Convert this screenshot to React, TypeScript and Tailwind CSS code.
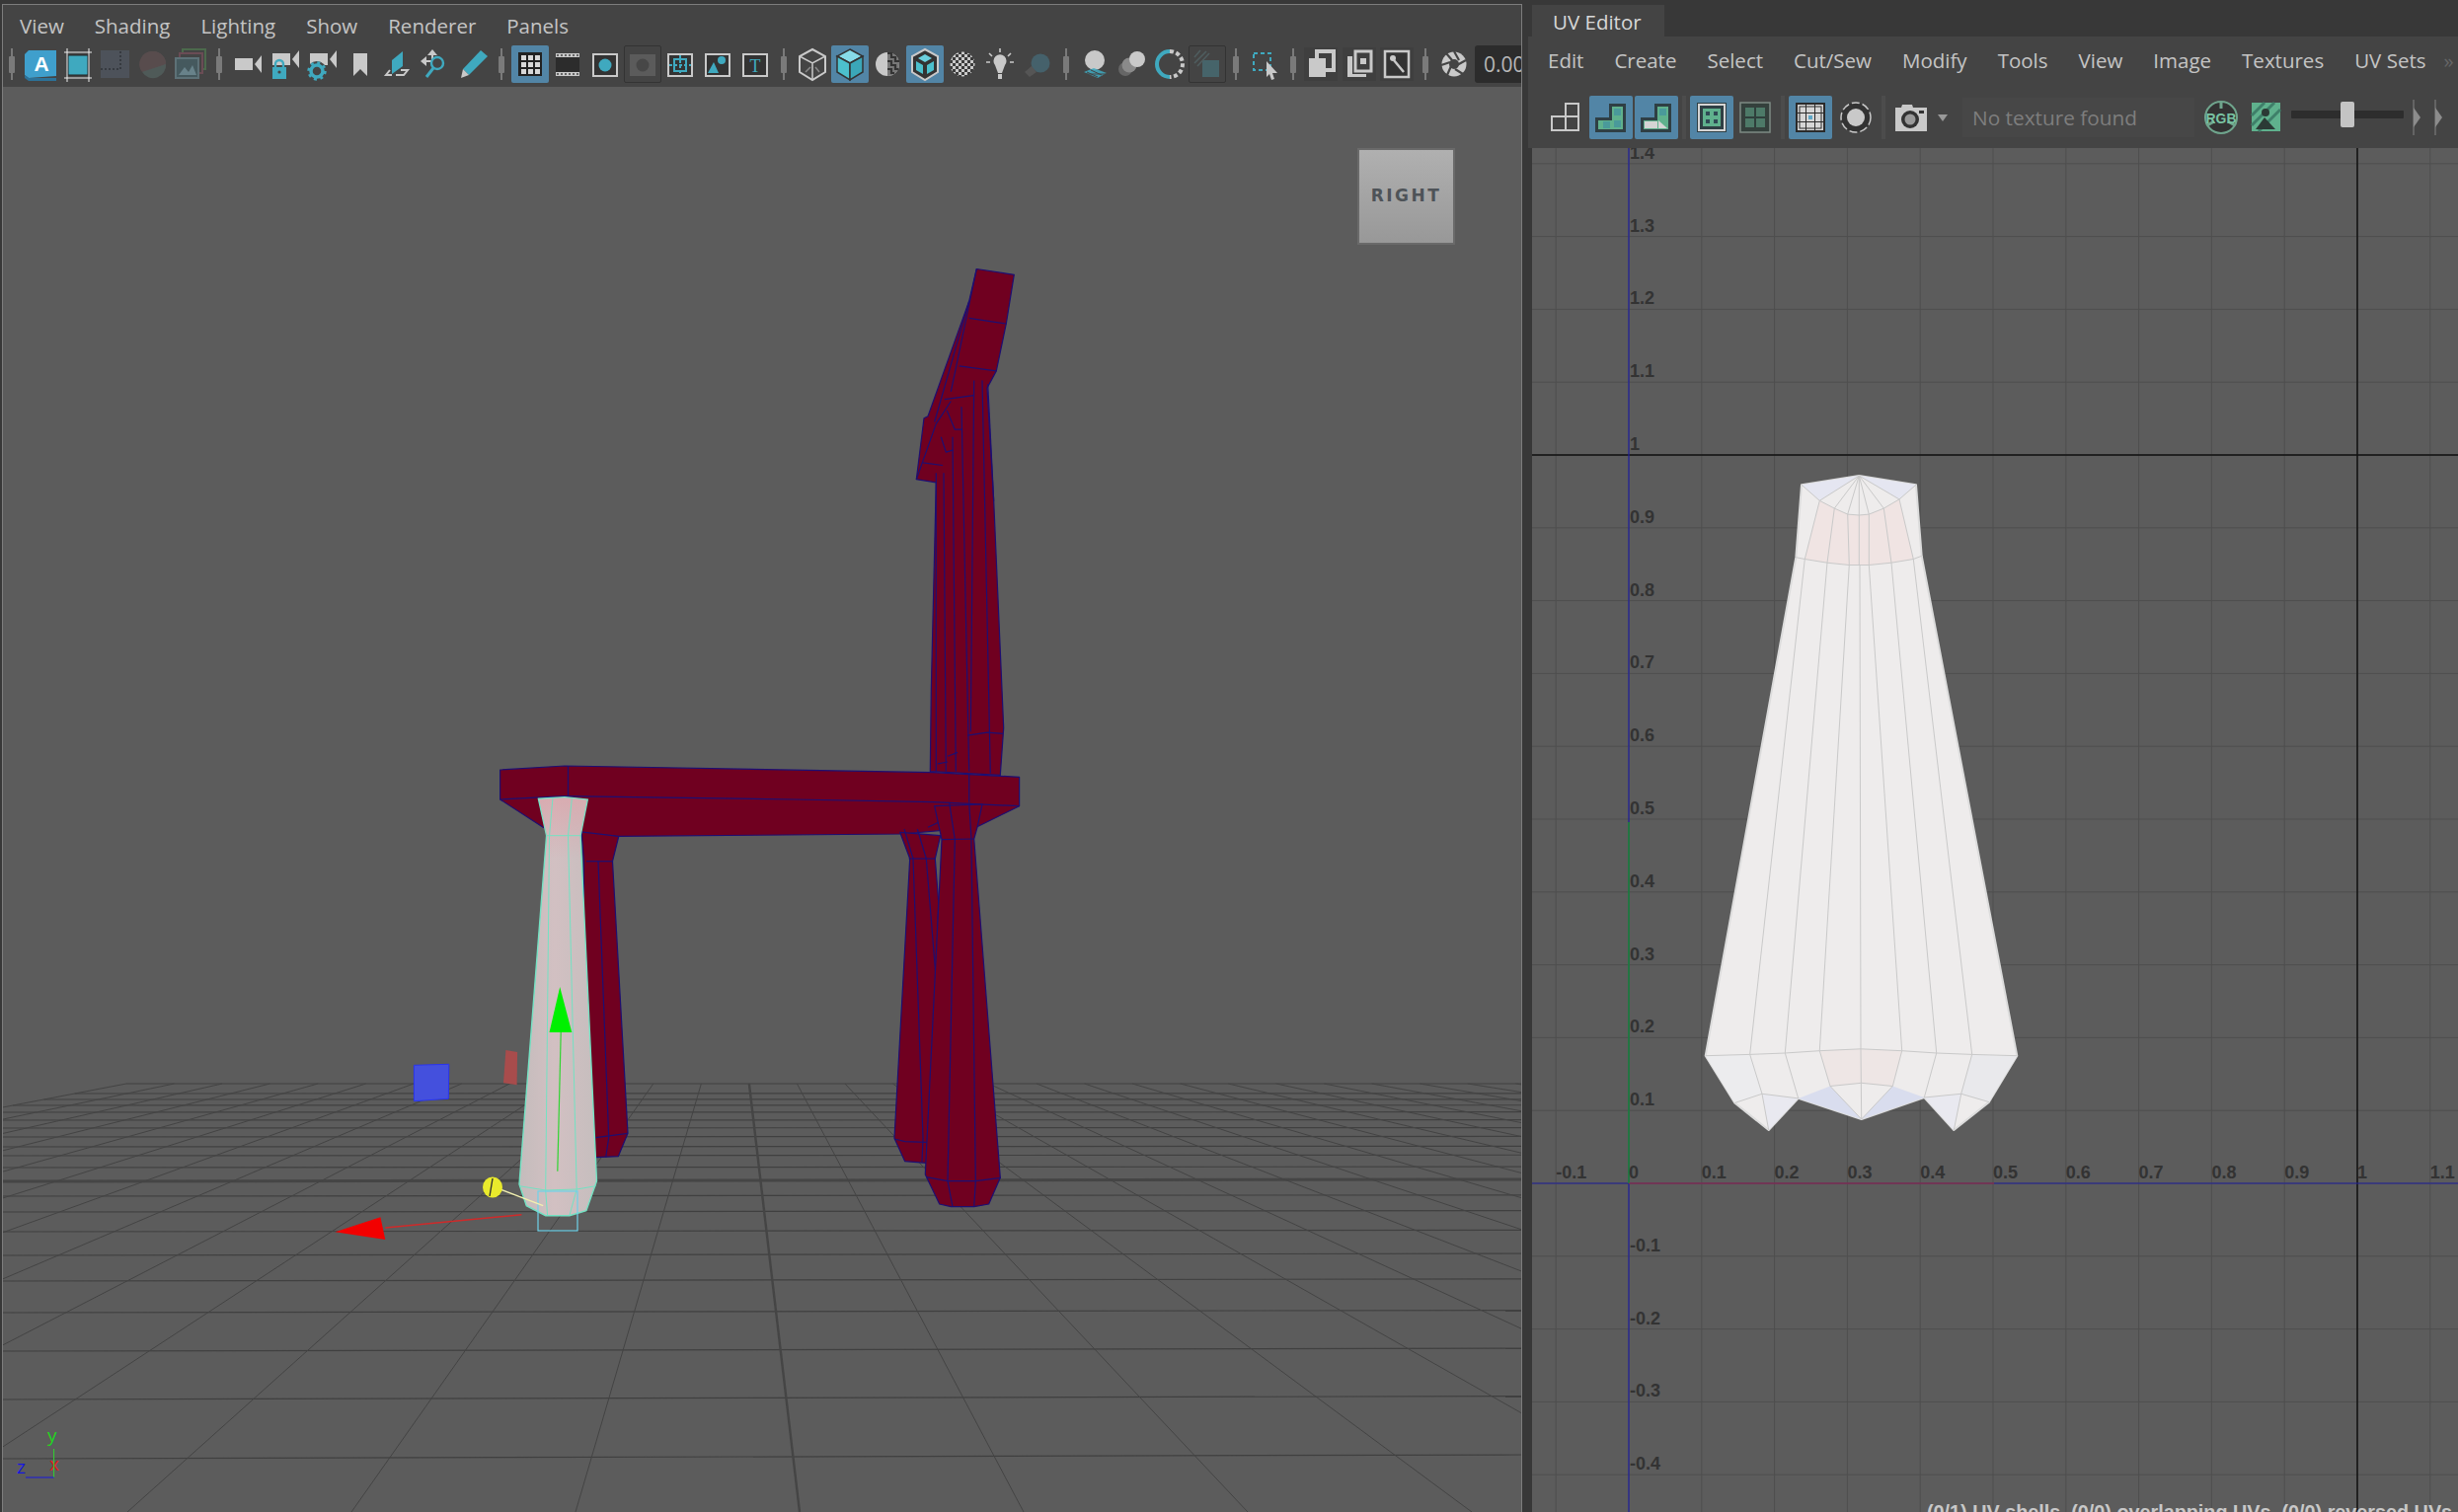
import React from "react";

const T = "#3fa9bf";
const G = "#c9c9c9";
const M = "#6fa58d";

const conv = (s: string, ox: number, oy: number, sx: number, sy: number) =>
  s
    .trim()
    .split(/\s+/)
    .map((p) => {
      const [x, y] = p.split(",").map(Number);
      return `${(ox + x / sx).toFixed(1)},${(oy + y / sy).toFixed(1)}`;
    })
    .join(" ");

const z4 = (s: string) => conv(s, 320, 760, 2.063, 3);
const z5 = (s: string) => conv(s, 880, 240, 3, 2.613);
const z9 = (s: string) => conv(s, 880, 760, 3, 3);
const z6 = (s: string) => conv(s, 1680, 460, 3, 2.178);

const Ico = ({ children, on, dim, w = 38 }: { children: React.ReactNode; on?: boolean; dim?: boolean; w?: number }) => (
  <div
    className={`flex h-[38px] shrink-0 items-center justify-center rounded-[2px] ${on ? "bg-[#5285a6]" : ""} ${
      dim ? "border border-[#333]" : ""
    }`}
    style={{ width: w }}
  >
    <svg width={38} height={38} viewBox="0 0 38 38" className="shrink-0">
      {children}
    </svg>
  </div>
);

const Handle = () => (
  <div className="relative flex h-[38px] w-[20px] shrink-0 items-center justify-center">
    <div className="absolute h-[32px] w-[2px] bg-[#7a7a7a]" />
    <div className="absolute h-[17px] w-[6px] rounded-[1px] bg-[#7a7a7a]" />
  </div>
);

const Cam = ({ x = 6, y = 8 }: { x?: number; y?: number }) => (
  <>
    <rect x={x} y={y} width={18} height={12} fill={G} />
    <polygon points={`${x + 27},${y - 3} ${x + 27},${y + 15} ${x + 20},${y + 6}`} fill={G} />
  </>
);

const viewIcons: React.ReactNode[][] = [
  [
    <Ico key="a">
      <polygon points="3,9 7,5 35,5 35,31 7,33 3,30" fill="#3f9fcc" />
      <polygon points="3,30 7,33 35,33 35,36 7,36 3,33" fill="#2c7299" />
      <text x="20" y="26" textAnchor="middle" fontSize="21" fontWeight="700" fill="#fff" fontFamily="Liberation Sans, sans-serif">A</text>
    </Ico>,
    <Ico key="frame">
      <rect x="9" y="10" width="20" height="20" fill={T} stroke="#222" />
      <path d="M5 7H33M5 33H33M8 3V37M30 3V37" stroke="#eee" strokeWidth="1" />
    </Ico>,
    <Ico key="d1">
      <rect x="4" y="5" width="29" height="28" fill="#4d525a" />
      <path d="M4 24H24V5" stroke="#363a40" strokeWidth="2" strokeDasharray="2 2" fill="none" />
    </Ico>,
    <Ico key="d2">
      <circle cx="19" cy="19" r="13" fill="#5a5255" />
      <path d="M19 6A13 13 0 0 1 32 19L8 27A13 13 0 0 1 19 6" fill="#584c4d" />
      <path d="M32 19A13 13 0 0 1 8 27Z" fill="#4f5a58" />
    </Ico>,
    <Ico key="d3">
      <rect x="11" y="4" width="23" height="20" fill="none" stroke="#4c6a4c" strokeWidth="2" />
      <rect x="8" y="8" width="23" height="20" fill="#444" stroke="#6a4c55" strokeWidth="2" />
      <rect x="4" y="13" width="23" height="20" fill="#45595e" stroke="#5d7177" strokeWidth="2" />
      <path d="M7 30L13 22L17 27L21 20L25 30Z" fill="#68828a" />
    </Ico>,
  ],
  [
    <Ico key="cam">
      <Cam x={6} y={13} />
    </Ico>,
    <Ico key="lock">
      <Cam x={6} y={8} />
      <rect x="6" y="22" width="14" height="12" fill={T} />
      <path d="M9 22V19A4 4 0 0 1 17 19V22" fill="none" stroke={T} strokeWidth="2.4" />
      <circle cx="13" cy="27" r="1.6" fill="#444" />
    </Ico>,
    <Ico key="gear">
      <Cam x={6} y={8} />
      <circle cx="13" cy="26" r="10" fill="#444" />
      <circle cx="13" cy="26" r="6" fill="none" stroke={T} strokeWidth="3.5" />
      <circle cx="13" cy="26" r="8.4" fill="none" stroke={T} strokeWidth="2.6" strokeDasharray="3 3.6" />
    </Ico>,
    <Ico key="mark">
      <polygon points="12,8 26,8 26,31 19,24 12,31" fill={G} />
    </Ico>,
    <Ico key="plane">
      <polygon points="13,15 24,6 24,21 13,29" fill={T} />
      <path d="M13 30H7L11 25M17 30H25L29 25H22" fill="none" stroke={G} strokeWidth="2" />
    </Ico>,
    <Ico key="find">
      <polygon points="16,4 21,10 11,10" fill={G} />
      <polygon points="4,16 10,11 10,21" fill={G} />
      <rect x="10" y="15" width="5" height="2" fill={G} />
      <rect x="15" y="10" width="2" height="5" fill={G} />
      <circle cx="21" cy="18" r="6" fill="none" stroke={T} strokeWidth="2.4" />
      <path d="M17 23L10 32" stroke={T} strokeWidth="3" />
    </Ico>,
    <Ico key="pencil">
      <polygon points="27,5 34,11 15,30 9,24" fill={T} />
      <polygon points="9,24 15,30 7,33" fill={G} />
    </Ico>,
  ],
  [
    <Ico key="grid" on>
      <rect x="7" y="7" width="24" height="24" fill="#222" />
      <g fill="#d8d8d8">
        {[10, 17, 24].map((x) => [10, 17, 24].map((y) => <rect key={`${x}${y}`} x={x} y={y} width="5" height="5" />))}
      </g>
    </Ico>,
    <Ico key="film">
      <rect x="7" y="8" width="24" height="23" fill={G} />
      <rect x="7" y="12" width="24" height="15" fill="#2c2c2c" />
      <path d="M8 10H30M8 29H30" stroke="#444" strokeWidth="1.5" strokeDasharray="2 2" />
    </Ico>,
    <Ico key="res">
      <rect x="7" y="9" width="24" height="22" fill="#333" stroke={G} strokeWidth="2" />
      <circle cx="19" cy="20" r="6.5" fill={T} />
    </Ico>,
    <Ico key="dim" dim>
      <rect x="6" y="9" width="26" height="22" fill="#5b5b5b" />
      <circle cx="19" cy="20" r="6.5" fill="#474747" />
    </Ico>,
    <Ico key="safe">
      <rect x="7" y="9" width="24" height="22" fill="#333" stroke={G} strokeWidth="2" />
      <path d="M19 10V30M8 20H30" stroke={T} strokeWidth="2" strokeDasharray="3 2" />
      <rect x="13" y="14" width="12" height="12" fill="none" stroke={T} strokeWidth="2" />
    </Ico>,
    <Ico key="shape">
      <rect x="7" y="9" width="24" height="22" fill="#333" stroke={G} strokeWidth="2" />
      <polygon points="9,28 15,17 20,28" fill={T} />
      <circle cx="23" cy="15" r="4" fill={T} />
    </Ico>,
    <Ico key="t">
      <rect x="7" y="9" width="24" height="22" fill="#333" stroke={G} strokeWidth="2" />
      <text x="19" y="27" textAnchor="middle" fontSize="18" fontFamily="Liberation Serif, serif" fill={T}>T</text>
    </Ico>,
  ],
  [
    <Ico key="wire">
      <polygon points="19,4 32,11 32,27 19,35 6,27 6,11" fill="#444" stroke={G} strokeWidth="2" />
      <path d="M6 11L19 18L32 11M19 18V35" stroke={G} strokeWidth="1.5" fill="none" />
      <path d="M12 27L17 22M26 27L22 22" stroke="#888" strokeWidth="1.5" />
    </Ico>,
    <Ico key="solid" on>
      <polygon points="19,4 32,11 19,18 6,11" fill="#87dbe8" stroke="#333" strokeWidth="1.5" />
      <polygon points="6,11 19,18 19,35 6,27" fill="#4cc0cd" stroke="#333" strokeWidth="1.5" />
      <polygon points="32,11 19,18 19,35 32,27" fill="#3ba7b8" stroke="#333" strokeWidth="1.5" />
    </Ico>,
    <Ico key="half">
      <circle cx="19" cy="19" r="12" fill={G} />
      <path d="M19 7A12 12 0 0 1 19 31Z" fill="#777" />
      <path d="M19 8H23V12H27V16H31M19 16H23V20H27V24H30M19 24H23V28H26" stroke="#333" strokeWidth="2.2" fill="none" />
    </Ico>,
    <Ico key="boxed" on>
      <polygon points="19,4 32,11 32,27 19,35 6,27 6,11" fill="#333" stroke={G} strokeWidth="2" />
      <polygon points="19,9 26,13 19,17 12,13" fill="#6bd0de" />
      <polygon points="10,16 17,20 17,29 10,25" fill="#4cc0cd" />
      <polygon points="28,16 21,20 21,29 28,25" fill="#4cc0cd" />
    </Ico>,
    <Ico key="check">
      <defs>
        <pattern id="chk" width="6" height="6" patternUnits="userSpaceOnUse" patternTransform="rotate(0)">
          <rect width="6" height="6" fill="#3c3c3c" />
          <rect width="3" height="3" fill={G} />
          <rect x="3" y="3" width="3" height="3" fill={G} />
        </pattern>
      </defs>
      <circle cx="19" cy="19" r="12.5" fill="url(#chk)" />
    </Ico>,
    <Ico key="bulb">
      <path d="M14 20A6.5 6.5 0 1 1 24 20L21 28H17Z" fill={G} />
      <rect x="17" y="29" width="4" height="5" fill={G} />
      <path d="M19 3V7M8 8L11 11M30 8L27 11M5 17H9M29 17H33" stroke={G} strokeWidth="1.6" />
    </Ico>,
    <Ico key="shadow">
      <circle cx="22" cy="18" r="9.5" fill="#45616b" />
      <path d="M6 27L13 21L18 27L11 32Z" fill="#555" />
    </Ico>,
  ],
  [
    <Ico key="ao">
      <circle cx="19" cy="15" r="10" fill={G} />
      <path d="M8 27L18 23L31 28L22 33Z" fill={T} opacity="0.85" />
      <path d="M11 27L22 32M15 25L26 30M8 29L31 29" stroke="#444" strokeWidth="1" />
    </Ico>,
    <Ico key="blur">
      <circle cx="12" cy="24" r="7" fill="#666" />
      <circle cx="16" cy="20" r="7.5" fill="#8a8a8a" />
      <circle cx="24" cy="14" r="8" fill={G} />
    </Ico>,
    <Ico key="ring">
      <path d="M19 6A13 13 0 0 0 19 32" fill="none" stroke={T} strokeWidth="4" />
      <path d="M19 6A13 13 0 0 1 19 32" fill="none" stroke={G} strokeWidth="4" strokeDasharray="4 2.5" />
    </Ico>,
    <Ico key="dimbox" dim>
      <rect x="14" y="15" width="17" height="17" fill="#46646a" />
      <path d="M6 12L12 5M6 18L18 6M9 21L21 8" stroke="#4f5d5f" strokeWidth="1.6" />
    </Ico>,
  ],
  [
    <Ico key="select">
      <rect x="8" y="8" width="17" height="17" fill="none" stroke={T} strokeWidth="2" strokeDasharray="4 3" />
      <polygon points="21,16 32,28 27,28 29,34 26,35 24,29 21,32" fill={G} />
    </Ico>,
  ],
  [
    <Ico key="c1">
      <rect x="1" y="2" width="34" height="34" fill="#3f3f3f" />
      <rect x="14" y="6" width="17" height="19" fill="none" stroke={G} strokeWidth="4" />
      <rect x="6" y="13" width="17" height="19" fill={G} />
    </Ico>,
    <Ico key="c2">
      <rect x="2" y="2" width="34" height="34" fill="#3f3f3f" />
      <path d="M15 6H31V26H15Z" fill="none" stroke={G} strokeWidth="3" />
      <path d="M12 11H7V32H26V29H12Z" fill={G} />
      <rect x="20" y="13" width="6" height="6" fill={G} />
    </Ico>,
    <Ico key="c3">
      <rect x="2" y="2" width="34" height="34" fill="#3f3f3f" />
      <rect x="7" y="6" width="24" height="26" fill="#333" stroke={G} strokeWidth="2.5" />
      <circle cx="15" cy="13" r="3" fill={G} />
      <path d="M16 15L26 27" stroke={G} strokeWidth="2.5" />
    </Ico>,
  ],
  [
    <Ico key="aperture">
      <circle cx="19" cy="19" r="12.5" fill={G} />
      <circle cx="19" cy="19" r="5" fill="#444" />
      <path d="M19 6L24 15M31 15L22 20M28 29L20 24M12 30L16 21M6 20L15 17M11 8L17 15" stroke="#444" strokeWidth="2.2" />
    </Ico>,
  ],
];

const Toolbar = () => (
  <div className="-ml-[1px] flex h-[43px] items-start overflow-hidden pt-[1px]">
    {viewIcons.map((group, i) => (
      <React.Fragment key={i}>
        <Handle />
        {group}
      </React.Fragment>
    ))}
    <div className="ml-[2px] h-[38px] w-[60px] shrink-0 rounded-l-[3px] bg-[#2c2c2c] pl-[9px] font-['Open_Sans',sans-serif] text-[21px] leading-[38px] text-[#b8b8b8]">
      0.00
    </div>
  </div>
);

const UvBtn = ({ children, on, w = 44 }: { children: React.ReactNode; on?: boolean; w?: number }) => (
  <div className={`flex h-[44px] shrink-0 items-center justify-center rounded-[2px] ${on ? "bg-[#5285a6]" : ""}`} style={{ width: w }}>
    <svg width={44} height={44} viewBox="0 0 44 44">
      {children}
    </svg>
  </div>
);

const Sep = () => (
  <div className="flex h-[44px] w-[12px] shrink-0 justify-center">
    <div className="h-full w-[4px] bg-[#4c4c4c]" />
  </div>
);

const UvToolbar = () => (
  <div className="flex h-[44px] items-center pl-[16px]">
    <UvBtn>
      <path d="M8 21H22V35H8ZM22 21H35V35H22ZM22 8H35V21H22Z" fill="none" stroke={G} strokeWidth="2" />
    </UvBtn>
    <div className="w-[2px]" />
    <UvBtn on>
      <path d="M6 22H20V8H37V37H6Z" fill="#2f3f44" />
      <path d="M9 25H23V11H34V34H9Z" fill="#5fb18d" />
      <rect x="25" y="13" width="7" height="7" fill="#4a9a9a" />
      <rect x="14" y="26" width="7" height="7" fill="#4a9a9a" />
      <rect x="25" y="25" width="7" height="7" fill="#4a9a9a" />
    </UvBtn>
    <div className="w-[2px]" />
    <UvBtn on>
      <path d="M6 22H20V8H37V37H6Z" fill="#2f3f44" />
      <path d="M9 25H23V11H34V34H9Z" fill="#5fb18d" />
      <rect x="25" y="13" width="7" height="7" fill="#4a9a9a" />
      <polygon points="10,26 23,26 23,33 10,33" fill="#d4d4d4" />
      <polygon points="24,25 33,33 24,33" fill="#d4d4d4" />
    </UvBtn>
    <Sep />
    <UvBtn on>
      <rect x="7" y="7" width="30" height="30" fill="#2f3f44" />
      <rect x="9" y="9" width="26" height="26" fill="none" stroke="#d4d4d4" strokeWidth="2" />
      <rect x="13" y="13" width="18" height="18" fill="#5fb18d" />
      <g fill="#2f4a55">
        <rect x="16" y="16" width="4" height="4" />
        <rect x="24" y="16" width="4" height="4" />
        <rect x="16" y="24" width="4" height="4" />
        <rect x="24" y="24" width="4" height="4" />
      </g>
    </UvBtn>
    <UvBtn>
      <rect x="7" y="7" width="30" height="30" fill="#34403c" stroke="#7d8a84" strokeWidth="1.5" />
      <rect x="12" y="12" width="20" height="20" fill="#4d7a68" />
      <path d="M22 12V32M12 22H32" stroke="#2f3f3c" strokeWidth="2" />
    </UvBtn>
    <Sep />
    <UvBtn on>
      <rect x="7" y="7" width="30" height="30" fill="#2a2a2a" />
      <g fill="#d6d6d6">
        {[9, 18, 27].map((x) => [9, 18, 27].map((y) => <rect key={`${x}-${y}`} x={x} y={y} width="8" height="8" />))}
      </g>
      <rect x="11" y="11" width="22" height="22" fill="none" stroke="#2a2a2a" strokeWidth="1" />
      <rect x="20" y="20" width="4" height="4" fill="#5fa8c8" />
    </UvBtn>
    <div className="w-[2px]" />
    <UvBtn>
      <circle cx="22" cy="22" r="15" fill="#333" stroke={G} strokeWidth="1.5" strokeDasharray="8 3" />
      <circle cx="22" cy="22" r="9" fill={G} />
    </UvBtn>
    <Sep />
    <UvBtn>
      <path d="M6 12H12L13 9H23L24 12H38V36H6Z" fill={G} />
      <circle cx="21" cy="24" r="9" fill="#333" />
      <circle cx="21" cy="24" r="5.5" fill="#9a9a9a" />
      <rect x="30" y="15" width="5" height="3" fill="#333" />
    </UvBtn>
    <svg width={20} height={44} viewBox="0 0 20 44" className="shrink-0">
      <polygon points="5,19 15,19 10,26" fill="#999" />
    </svg>
    <div className="ml-[10px] h-[40px] w-[235px] shrink-0 bg-[#474747] pl-[10px] font-['Open_Sans',sans-serif] text-[20.8px] leading-[40px] text-[#7e7e7e]">
      No texture found
    </div>
    <div className="w-[5px]" />
    <UvBtn>
      <circle cx="22" cy="22" r="16" fill="#333" stroke={M} strokeWidth="2" />
      <path d="M22 6V13M8 30L15 26M36 30L29 26" stroke={M} strokeWidth="3" />
      <text x="22" y="28" textAnchor="middle" fontSize="15" fontWeight="700" fontFamily="Liberation Sans, sans-serif" fill="#79c3a2" textLength="31" lengthAdjust="spacingAndGlyphs">RGB</text>
    </UvBtn>
    <div className="w-[2px]" />
    <UvBtn>
      <rect x="7" y="7" width="29" height="29" fill="#5fb18d" />
      <path d="M7 20L20 7M7 30L30 7M14 36L36 14" stroke="#3f7f69" strokeWidth="3" />
      <circle cx="21" cy="17" r="4" fill="#2b3a35" />
      <polygon points="11,34 20,22 31,34" fill="#2b3a35" />
    </UvBtn>
    <div className="relative ml-[3px] h-[8px] w-[114px] shrink-0 -translate-y-[3px] rounded-[1px] bg-[#2d2d2d]">
      <div className="absolute top-[-9px] left-[50px] h-[26px] w-[14px] rounded-[2px] bg-[#c4c4c4]" />
    </div>
    <svg width={44} height={44} viewBox="0 0 44 44" className="ml-[5px] shrink-0">
      <path d="M5 4V40" stroke="#6f6f6f" strokeWidth="1.5" />
      <polygon points="5,12 12,22 5,32" fill="#8c8c8c" />
      <path d="M27 4V40" stroke="#6f6f6f" strokeWidth="1.5" />
      <polygon points="27,12 34,22 27,32" fill="#8c8c8c" />
    </svg>
  </div>
);

// perspective floor of the 3d view
const vpX = (y: number, k: number) => 745 + (810 + 227 * k - 745) * ((y - 980) / 552);
const floorYs = [1098, 1108, 1114, 1120, 1127, 1135, 1143, 1152, 1162, 1171, 1183, 1196, 1212, 1228, 1248, 1272, 1298, 1330, 1369, 1418, 1478];

const Floor = () => (
  <g stroke="#404040" strokeWidth="1.2" fill="none">
    {floorYs.map((y) => {
      const t = (y - 1098) / 380;
      const startX = Math.max(3, vpX(y, -13));
      const heavy = y === 1196;
      return (
        <line key={y} x1={startX} y1={y + (heavy ? 1 : 0)} x2={1542} y2={y - t * 4} stroke={heavy ? "#454545" : "#404040"} strokeWidth={heavy ? 3 : 1.2} />
      );
    })}
    {Array.from({ length: 30 }, (_, i) => i - 13).map((k) => (
      <line key={k} x1={vpX(1098, k)} y1={1098} x2={vpX(1532, k)} y2={1532} stroke={k === 0 ? "#454545" : "#444"} strokeWidth={k === 0 ? 2.4 : 1} />
    ))}
  </g>
);

const CHAIR = "#700020";
const NAVY = "#1d0f72";

const Chair = () => (
  <g fill={CHAIR} stroke={NAVY} strokeWidth="1.2" strokeLinejoin="round">
    {/* back left leg */}
    <polygon points={z4("555,240 633,262 620,338 652,1165 632,1235 585,1238 560,1200 560,338")} />
    <polyline fill="none" points={z4("565,338 620,338")} />
    <polyline fill="none" points={z4("585,1178 652,1165")} />
    <polyline fill="none" points={z4("590,338 612,1178 606,1238")} />
    {/* backrest */}
    <polygon points={z5("328,85 442,100 418,230 388,355 360,400 380,700 410,1300 400,1425 187,1415 190,1200 205,650 145,642 168,480 180,475 305,170")} />
    {[
      "305,215 418,230",
      "275,342 388,355",
      "328,85 250,410",
      "305,170 200,490",
      "165,598 225,605",
      "145,642 205,495 250,435",
      "230,430 320,420",
      "205,625 205,1415",
      "228,625 235,1415",
      "255,530 265,1415",
      "282,450 305,1415",
      "320,380 310,1310",
      "345,380 370,1420",
      "362,390 380,700",
      "238,460 262,510 285,510",
      "220,530 235,570 255,565",
      "300,1320 360,1312 408,1315",
      "210,1395 240,1390",
      "240,1375 270,1365",
    ].map((p) => (
      <polyline key={p} fill="none" points={z5(p)} />
    ))}
    {/* seat */}
    <polygon points={z4("385,60 520,48 1170,65 1290,68 1470,82 1470,170 1380,235 1225,255 980,258 633,262 475,235 385,150")} />
    {["385,150 520,140 1000,150 1290,158 1470,170", "527,48 527,140", "1365,72 1365,158"].map((p) => (
      <polyline key={p} fill="none" points={z4(p)} />
    ))}
    {/* front right legs */}
    <polygon points={z9("95,250 125,330 78,1180 110,1250 175,1255 205,700 212,460 202,330 218,260")} />
    {["122,330 202,330", "108,240 135,330 165,1180 162,1252", "148,240 175,330 205,700", "78,1182 110,1190 175,1192", "180,235 212,220"].map((p) => (
      <polyline key={p} fill="none" points={z9(p)} />
    ))}
    <polygon points={z9("200,170 345,165 330,235 320,270 400,1300 365,1380 320,1388 250,1388 215,1380 172,1290 222,272")} />
    {[
      "222,272 320,270",
      "245,160 262,272 240,1310 255,1388",
      "305,160 312,270 325,1310 320,1388",
      "175,1298 240,1310 325,1310 402,1300",
    ].map((p) => (
      <polyline key={p} fill="none" points={z9(p)} />
    ))}
  </g>
);

const Gizmo = () => (
  <g>
    <polygon points={z4("205,958 278,955 277,1060 205,1067")} fill="#4450dd" stroke="#2a35ee" strokeWidth="1" />
    <polygon points={z4("397,912 421,918 420,1018 392,1012")} fill="#a84c4c" />
    <defs>
      <linearGradient id="vase" x1="0" y1="0" x2="1" y2="0">
        <stop offset="0" stopColor="#c4bcbc" />
        <stop offset="0.45" stopColor="#d2c0c2" />
        <stop offset="1" stopColor="#c6bebe" />
      </linearGradient>
      <linearGradient id="vaseTop" x1="0" y1="0" x2="0" y2="1">
        <stop offset="0" stopColor="#dba7ad" stopOpacity="0.8" />
        <stop offset="1" stopColor="#dba7ad" stopOpacity="0" />
      </linearGradient>
    </defs>
    <polygon
      points={z4("465,148 520,143 568,150 553,260 587,1310 565,1400 530,1415 480,1415 440,1385 425,1320 482,260")}
      fill="url(#vase)"
      stroke="#73e2c3"
      strokeWidth="1.4"
    />
    <polygon points={z4("467,150 520,145 566,152 553,260 552,330 484,330 482,260")} fill="url(#vaseTop)" />
    {["482,260 553,260", "425,1325 480,1338 545,1335 585,1325", "495,148 488,260 480,1338 484,1415", "535,148 527,260 545,1335 530,1415"].map((p) => (
      <polyline key={p} points={z4(p)} fill="none" stroke="#73e2c3" strokeWidth="1" />
    ))}
    <rect x={545} y={1207} width={40} height={40} fill="none" stroke="#6ed3ea" strokeWidth="1.2" />
    <polygon points={z4("510,720 488,858 535,858")} fill="#00f000" />
    <polyline points={z4("512,858 505,1280")} stroke="#31d431" strokeWidth="1.2" fill="none" />
    <polygon points={z4("40,1465 135,1420 145,1488")} fill="#f20000" />
    <polyline points={z4("145,1452 430,1412")} stroke="#d02a2a" strokeWidth="1.5" fill="none" />
    <polyline points={z4("385,1335 475,1385")} stroke="#f2f0b0" strokeWidth="1.4" fill="none" />
    <ellipse cx={499} cy={1203} rx={10} ry={10.5} fill="#e9ea2c" />
    <path d="M499 1194L496 1212" stroke="#333" strokeWidth="1.4" />
  </g>
);

const UvShell = () => {
  const lines = [
    "418,228 445,232 513,240 580,245 640,245 708,240 775,232 800,225",
    "445,232 278,1325",
    "513,240 385,1322",
    "580,245 490,1317",
    "612,245 615,1313",
    "640,245 740,1317",
    "708,240 845,1322",
    "775,232 953,1325",
    "610,48 575,133",
    "610,48 535,120",
    "610,48 490,103",
    "610,48 640,133",
    "610,48 685,120",
    "610,48 732,100",
    "610,48 610,245",
    "435,68 490,103 535,120 575,133 610,135 640,133 685,120 732,100 783,68",
    "490,103 445,232",
    "535,120 513,240",
    "575,133 580,245",
    "640,133 640,245",
    "685,120 708,240",
    "732,100 775,232",
    "143,1328 278,1325 385,1322 490,1317 615,1313 740,1317 845,1322 953,1325 1090,1328",
    "278,1325 315,1412 335,1492",
    "385,1322 425,1422",
    "490,1317 522,1395 617,1468",
    "615,1313 617,1468",
    "740,1317 712,1395 617,1468",
    "845,1322 808,1420",
    "953,1325 920,1412 898,1492",
    "232,1432 315,1412 425,1422",
    "522,1395 617,1388 712,1395",
    "808,1420 920,1412 1005,1430",
  ];
  return (
    <g>
      <polygon
        points={z6("435,68 610,48 783,68 800,225 1090,1328 1005,1430 898,1492 808,1420 617,1468 425,1422 335,1492 232,1432 143,1328 418,228")}
        fill="#eeecec"
        stroke="#dcdcdc"
        strokeWidth="2"
        strokeLinejoin="round"
      />
      <polygon points={z6("490,103 535,120 575,133 610,135 640,133 685,120 732,100 775,232 708,240 640,245 580,245 513,240 445,232")} fill="#f0e4e3" />
      <polygon points={z6("435,68 610,48 490,103")} fill="#e5e6f1" />
      <polygon points={z6("783,68 610,48 732,100")} fill="#e5e6f1" />
      <polygon points={z6("490,1317 615,1313 740,1317 712,1395 617,1388 522,1395")} fill="#eee6e5" />
      <polygon points={z6("425,1422 522,1395 617,1468")} fill="#d9ddee" />
      <polygon points={z6("808,1420 712,1395 617,1468")} fill="#d9ddee" />
      <polygon points={z6("143,1328 278,1325 315,1412 232,1432")} fill="#ececee" />
      <polygon points={z6("953,1325 1090,1328 1005,1430 920,1412")} fill="#e9e9ec" />
      <polygon points={z6("315,1412 425,1422 335,1492")} fill="#e9e9f0" />
      <polygon points={z6("808,1420 920,1412 898,1492")} fill="#e9e9f0" />
      {lines.map((p) => (
        <polyline key={p} points={z6(p)} fill="none" stroke="#c9c9c9" strokeWidth="1" />
      ))}
    </g>
  );
};

const UX = (u: number) => 1650 + u * 738;
const UY = (v: number) => 1199 - v * 738;
const fmt = (n: number) => (n / 10).toString();

const UvView = () => (
  <svg width={938} height={1382} viewBox="1552 150 938 1382" className="block bg-[#5c5c5c]">
    <g stroke="#4f4f4f" strokeWidth="1">
      {Array.from({ length: 15 }, (_, i) => i - 1).map((i) => (
        <line key={i} x1={UX(i / 10)} y1={150} x2={UX(i / 10)} y2={1532} />
      ))}
      {Array.from({ length: 20 }, (_, i) => i - 5).map((i) => (
        <line key={i} x1={1552} y1={UY(i / 10)} x2={2490} y2={UY(i / 10)} />
      ))}
    </g>
    <line x1={2388} y1={150} x2={2388} y2={1532} stroke="#111" strokeWidth="1.5" />
    <line x1={1552} y1={UY(1)} x2={2490} y2={UY(1)} stroke="#111" strokeWidth="1.5" />
    <line x1={1650} y1={150} x2={1650} y2={1532} stroke="#2020a0" strokeWidth="1.2" />
    <line x1={1552} y1={1199} x2={2490} y2={1199} stroke="#2020a0" strokeWidth="1.2" />
    <line x1={1650} y1={833} x2={1650} y2={1199} stroke="#19a019" strokeWidth="1.2" />
    <line x1={1650} y1={1199} x2={2020} y2={1199} stroke="#a83030" strokeWidth="1.2" />
    <UvShell />
    <g fill="#2f2f2f" fontSize="18" fontWeight="700" fontFamily="Liberation Sans, sans-serif" opacity="0.9">
      {Array.from({ length: 13 }, (_, i) => i - 1).map((i) => (
        <text key={i} x={UX(i / 10)} y={1194}>
          {i === 10 ? "1" : i === 11 ? "1.1" : fmt(i)}
        </text>
      ))}
      {[-4, -3, -2, -1, 1, 2, 3, 4, 5, 6, 7, 8, 9, 10, 11, 12, 13, 14].map((i) => (
        <text key={i} x={1651} y={UY(i / 10) - 5}>
          {i === 10 ? "1" : fmt(i)}
        </text>
      ))}
    </g>
    <text x={1952} y={1539} fill="#c8c8c8" fontSize="19.8" fontWeight="700" fontFamily="Liberation Sans, sans-serif">
      (0/1) UV shells, (0/0) overlapping UVs, (0/0) reversed UVs
    </text>
  </svg>
);

const leftMenu = ["View", "Shading", "Lighting", "Show", "Renderer", "Panels"];
const uvMenu = ["Edit", "Create", "Select", "Cut/Sew", "Modify", "Tools", "View", "Image", "Textures", "UV Sets"];

export default function App() {
  return (
    <div className="flex h-[1532px] w-[2490px] overflow-hidden bg-[#383838] font-['Open_Sans',sans-serif] text-[20.5px] text-[#c4c4c4]">
      {/* model panel */}
      <div className="h-full w-[1542px] shrink-0 pt-[4px] pl-[2px]">
        <div className="flex h-full flex-col border-t border-r border-l border-[#7d7d7d] bg-[#444]">
          <div className="flex h-[40px] items-center gap-[31px] pt-[2px] pl-[17px]">
            {leftMenu.map((m) => (
              <span key={m}>{m}</span>
            ))}
          </div>
          <Toolbar />
          <div className="relative flex-1 overflow-hidden bg-[#5c5c5c]">
            <svg width={1538} height={1444} viewBox="3 88 1538 1444" className="block">
              <Floor />
              <Chair />
              <Gizmo />
              <g fontFamily="Open Sans, sans-serif" fontSize="19">
                <text x={48} y={1461} fill="#22d422">y</text>
                <text x={17} y={1493} fill="#1616e0">z</text>
                <text x={50} y={1490} fill="#e02020">x</text>
              </g>
              <path d="M54.6 1468V1497" stroke="#31d431" strokeWidth="1" />
              <path d="M26 1497H54.6" stroke="#1616e0" strokeWidth="1" />
            </svg>
            {/* view cube */}
            <div className="absolute top-[62px] left-[1372px] flex h-[98px] w-[99px] items-center justify-center border-[2px] border-[#6a6a6a] bg-gradient-to-b from-[#b0b0b0] to-[#989898] font-['DejaVu_Sans',sans-serif] text-[17px] font-bold tracking-[2.5px] text-[#4e5358]">
              RIGHT
            </div>
          </div>
        </div>
      </div>

      {/* uv editor */}
      <div className="flex h-full flex-1 flex-col">
        <div className="h-[37px] pt-[5px] pl-[10px]">
          <div className="flex h-[32px] w-[134px] items-center bg-[#444] pt-[2px] pl-[21px] text-[#d8d8d8]">UV Editor</div>
        </div>
        <div className="ml-[6px] h-[113px] bg-[#444]">
          <div className="flex h-[48px] items-center gap-[31px] pl-[20px]">
            {uvMenu.map((m) => (
              <span key={m}>{m}</span>
            ))}
            <span className="ml-[-13px] text-[#666]">»</span>
          </div>
          <div className="pt-[12px]">
            <UvToolbar />
          </div>
        </div>
        <div className="ml-[10px] flex-1 overflow-hidden">
          <UvView />
        </div>
      </div>
    </div>
  );
}
